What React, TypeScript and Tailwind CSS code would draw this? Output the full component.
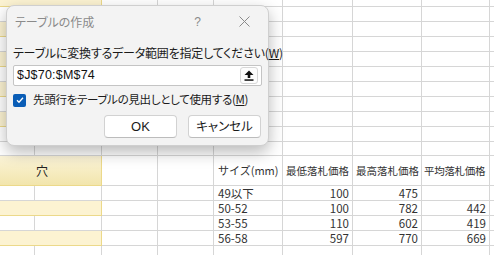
import { Fragment } from 'react';

const ROWS_ABOVE = 9;

type DataRow = { size: string; min: string; max: string; avg: string; yellow: boolean };

const data: DataRow[] = [
  { size: '49以下', min: '100', max: '475', avg: '', yellow: false },
  { size: '50-52', min: '100', max: '782', avg: '442', yellow: true },
  { size: '53-55', min: '110', max: '602', avg: '419', yellow: false },
  { size: '56-58', min: '597', max: '770', avg: '669', yellow: true },
];

function AB({ yellow, h }: { yellow: boolean; h: string }) {
  if (yellow) {
    return <div className={`${h} w-[102px] shrink-0 border-r border-b border-[#ecd98a] bg-[#fcf3d2]`} />;
  }
  return (
    <Fragment>
      <div className={`${h} w-[35px] shrink-0 border-r border-b border-[#d6d6d6]`} />
      <div className={`${h} w-[67px] shrink-0 border-r border-b border-[#d6d6d6]`} />
    </Fragment>
  );
}

function Blank({ h }: { h: string }) {
  return (
    <Fragment>
      <div className={`${h} w-[56px] shrink-0 border-r border-b border-[#d6d6d6]`} />
      <div className={`${h} w-[56px] shrink-0 border-r border-b border-[#d6d6d6]`} />
      <div className={`${h} w-[69px] shrink-0 border-r border-b border-[#d6d6d6]`} />
      <div className={`${h} w-[70px] shrink-0 border-r border-b border-[#d6d6d6]`} />
      <div className={`${h} w-[69px] shrink-0 border-r border-b border-[#d6d6d6]`} />
      <div className={`${h} w-[68px] shrink-0 border-r border-b border-[#d6d6d6]`} />
      <div className={`${h} grow border-b border-[#d6d6d6]`} />
    </Fragment>
  );
}

function Sheet() {
  return (
    <div className="flex flex-col text-[11.5px] text-[#333] [font-family:'Noto_Sans_CJK_JP',sans-serif]">
      <div className="flex">
        <AB yellow h="h-[7px]" />
        <Blank h="h-[7px]" />
      </div>
      {Array.from({ length: ROWS_ABOVE }).map((_, i) => (
        <div key={i} className="flex">
          <AB yellow={i % 2 === 1} h="h-[15px]" />
          <Blank h="h-[15px]" />
        </div>
      ))}
      <div className="flex">
        <AB yellow={false} h="h-[14px]" />
        <Blank h="h-[14px]" />
      </div>
      <div className="flex h-[30px] text-[10.5px] whitespace-nowrap">
        <div className="flex w-[102px] shrink-0 items-center border-r border-b border-[#ecd98a] bg-gradient-to-b from-[#fbf4d8] to-[#f2e5ad] pl-[36px] text-[12px] text-[#222]">
          穴
        </div>
        <div className="w-[56px] shrink-0 border-r border-b border-[#d6d6d6]" />
        <div className="w-[56px] shrink-0 border-r border-b border-[#d6d6d6]" />
        <div className="flex w-[69px] shrink-0 items-center border-r border-b border-[#d6d6d6] pl-[4px] text-[11px]">サイズ(mm)</div>
        <div className="flex w-[70px] shrink-0 items-center border-r border-b border-[#d6d6d6] pl-[3px]">最低落札価格</div>
        <div className="flex w-[69px] shrink-0 items-center border-r border-b border-[#d6d6d6] pl-[3px]">最高落札価格</div>
        <div className="flex w-[68px] shrink-0 items-center border-r border-b border-[#d6d6d6] pl-[2px] tracking-[-0.3px]">平均落札価格</div>
        <div className="grow border-b border-[#d6d6d6]" />
      </div>
      {data.map((r) => (
        <div key={r.size} className="flex h-[15px] leading-[14px]">
          <AB yellow={r.yellow} h="h-[15px]" />
          <div className="w-[56px] shrink-0 border-r border-b border-[#d6d6d6]" />
          <div className="w-[56px] shrink-0 border-r border-b border-[#d6d6d6]" />
          <div className="w-[69px] shrink-0 border-r border-b border-[#d6d6d6] pl-[4px]">{r.size}</div>
          <div className="w-[70px] shrink-0 border-r border-b border-[#d6d6d6] pr-[3px] text-right">{r.min}</div>
          <div className="w-[69px] shrink-0 border-r border-b border-[#d6d6d6] pr-[3px] text-right">{r.max}</div>
          <div className="w-[68px] shrink-0 border-r border-b border-[#d6d6d6] pr-[3px] text-right">{r.avg}</div>
          <div className="grow border-b border-[#d6d6d6]" />
        </div>
      ))}
      <div className="flex">
        <AB yellow={false} h="h-[15px]" />
        <Blank h="h-[15px]" />
      </div>
    </div>
  );
}

function UploadIcon() {
  return (
    <svg width="10" height="11" viewBox="0 0 10 11" fill="#111">
      <path d="M5 0.5 L9.5 5 L6.3 5 L6.3 8 L3.7 8 L3.7 5 L0.5 5 Z" />
      <rect x="0.5" y="9.3" width="9" height="1.5" />
    </svg>
  );
}

function Dialog() {
  return (
    <div className="absolute top-[5px] left-[6px] flex h-[141px] w-[263px] flex-col rounded-[8px] border border-[#cfcfcf] bg-[#f3f3f3] pr-[6px] pl-[6px] shadow-[0_6px_16px_rgba(0,0,0,0.28)] [font-family:'Noto_Sans_CJK_JP',sans-serif] [font-feature-settings:'palt']">
      <div className="flex h-[31px] shrink-0 items-center">
        <span className="pl-[2px] text-[12px] text-[#8a8a8a]">テーブルの作成</span>
        <span className="mr-[38px] ml-auto text-[12px] text-[#8a8a8a] [font-family:'Liberation_Sans',sans-serif]">?</span>
        <svg width="11" height="11" viewBox="0 0 11 11" className="mr-[12px]" stroke="#8a8a8a" strokeWidth="1">
          <path d="M0.5 0.5 L10.5 10.5 M10.5 0.5 L0.5 10.5" />
        </svg>
      </div>
      <div className="mt-[8px] h-[16px] text-[12px] leading-[16px] tracking-[-0.2px] whitespace-nowrap text-[#1a1a1a]">
        テーブルに変換するデータ範囲を指定してください(<span className="underline">W</span>)
      </div>
      <div className="mt-[4px] flex h-[21px] items-center rounded-[2px] border border-[#c4c4c4] bg-white pr-[3px] pl-[3px]">
        <span className="text-[12.5px] tracking-[0.2px] text-[#111] [font-family:'Liberation_Sans',sans-serif]">$J$70:$M$74</span>
        <div className="ml-auto flex h-[17px] w-[18px] items-center justify-center rounded-[3px] border border-[#d8d8d8] bg-[#fdfdfd]">
          <UploadIcon />
        </div>
      </div>
      <div className="mt-[7px] flex h-[14px] items-center">
        <div className="flex h-[13px] w-[13px] items-center justify-center rounded-[2px] bg-[#0a5db6]">
          <svg width="8" height="8" viewBox="0 0 8 8" fill="none" stroke="white" strokeWidth="1.3">
            <path d="M1 4.2 L3 6.2 L7 1.8" />
          </svg>
        </div>
        <span className="ml-[7px] text-[11.5px] tracking-[-0.3px] whitespace-nowrap text-[#1a1a1a]">
          先頭行をテーブルの見出しとして使用する(<span className="underline">M</span>)
        </span>
      </div>
      <div className="mt-[8px] flex justify-end gap-[11px] pr-[1px]">
        <button className="h-[23px] w-[73px] rounded-[4px] border border-[#d2d2d2] border-b-[#bcbcbc] bg-white text-[13px] text-[#1a1a1a] [font-family:'Liberation_Sans',sans-serif]">
          OK
        </button>
        <button className="h-[23px] w-[73px] rounded-[4px] border border-[#d2d2d2] border-b-[#bcbcbc] bg-white text-[12.5px] text-[#1a1a1a]">
          キャンセル
        </button>
      </div>
    </div>
  );
}

export default function App() {
  return (
    <div className="relative h-[255px] w-[494px] overflow-hidden bg-white">
      <Sheet />
      <Dialog />
    </div>
  );
}
